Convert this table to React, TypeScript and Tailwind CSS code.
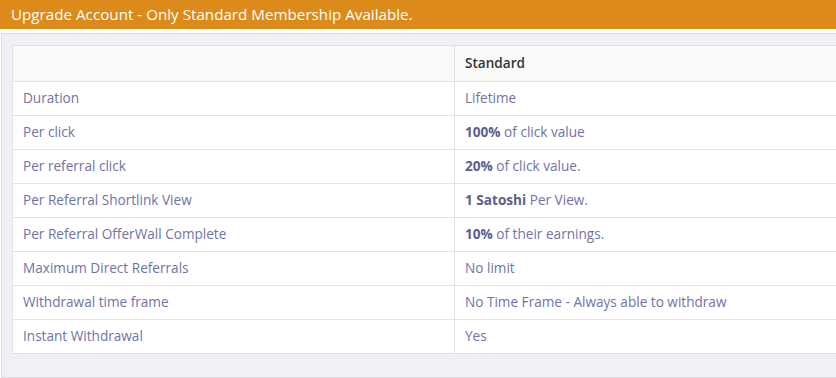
import React from "react";

type Row = { label: string; strong?: string; rest: string };

const rows: Row[] = [
  { label: "Duration", rest: "Lifetime" },
  { label: "Per click", strong: "100%", rest: " of click value" },
  { label: "Per referral click", strong: "20%", rest: " of click value." },
  { label: "Per Referral Shortlink View", strong: "1 Satoshi", rest: " Per View." },
  { label: "Per Referral OfferWall Complete", strong: "10%", rest: " of their earnings." },
  { label: "Maximum Direct Referrals", rest: "No limit" },
  { label: "Withdrawal time frame", rest: "No Time Frame - Always able to withdraw" },
  { label: "Instant Withdrawal", rest: "Yes" },
];

export default function App() {
  return (
    <div className="w-[836px] h-[378px] overflow-hidden bg-white font-['Open_Sans',sans-serif]">
      <div className="h-[29px] bg-[#dc8a1a] text-white text-[15.2px] flex items-center pl-[11px]">
        Upgrade Account - Only Standard Membership Available.
      </div>
      <div className="mt-[4px] ml-[1px] w-[900px] h-[345px] bg-[#f0f1f6] border border-[#dcdde2] pt-[11px] pl-[10px]">
        <table className="w-[880px] border-collapse text-[13.6px] text-[#7173a5]">
          <thead>
            <tr className="h-[36px] bg-[#f9f9fa]">
              <th className="w-[442px] border border-[#e2e2e5]"></th>
              <th className="border border-[#e2e2e5] text-left font-semibold text-[#333333] pl-[10px]">
                Standard
              </th>
            </tr>
          </thead>
          <tbody>
            {rows.map((r) => (
              <tr key={r.label} className="h-[34px] bg-white">
                <td className="border border-[#e2e2e5] pl-[10px]">{r.label}</td>
                <td className="border border-[#e2e2e5] pl-[10px]">
                  {r.strong && <b className="font-bold text-[#5c5e8c]">{r.strong}</b>}
                  {r.rest}
                </td>
              </tr>
            ))}
          </tbody>
        </table>
      </div>
    </div>
  );
}
